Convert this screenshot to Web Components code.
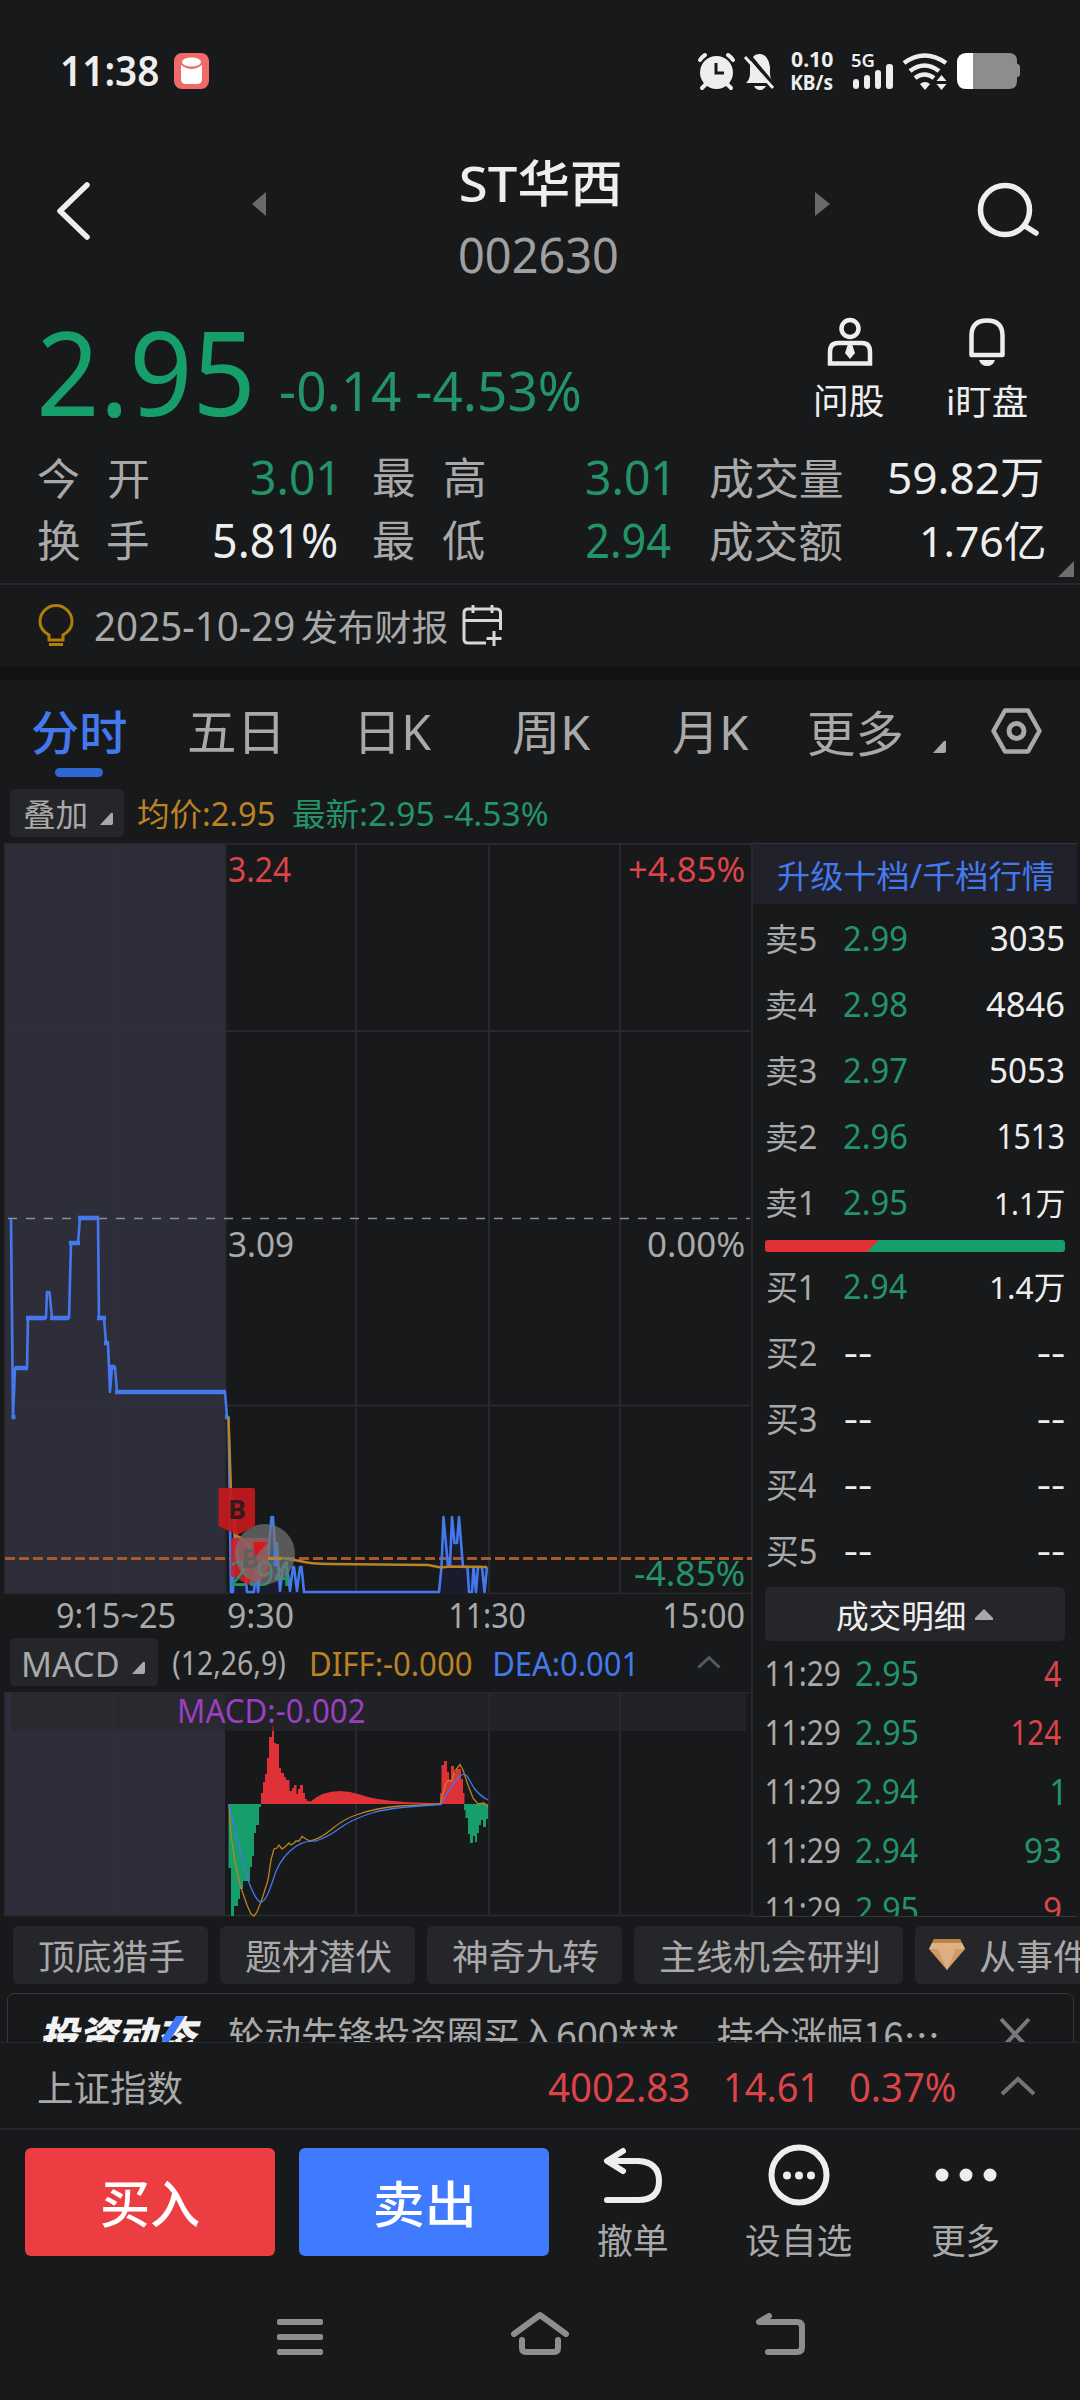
<!DOCTYPE html>
<html lang="zh-CN">
<head>
<meta charset="utf-8">
<title>ST华西 002630</title>
<style>
  html { background: #17191a; }
  body {
    margin: 0;
    width: 1080px;
    height: 2400px;
    overflow: hidden;
    display: flex;
    flex-direction: column;
    background: #17191a;
    color: #a9a9a9;
    font-family: "Noto Sans", "Noto Sans CJK SC", sans-serif;
    --white: #eeeeee;
    --green: #169e6b;
    --green-text: #239468;
    --red: #e03236;
    --red-text: #db4448;
    --blue: #4479ee;
    --orange: #bd8223;
    --chip: #25262a;
    --line: #28292c;
  }
</style>
</head>
<body>
<status-bar></status-bar>
<title-bar></title-bar>
<quote-panel></quote-panel>
<report-notice></report-notice>
<period-tabs></period-tabs>
<overlay-bar></overlay-bar>
<market-board></market-board>
<signal-chips></signal-chips>
<news-strip></news-strip>
<index-bar></index-bar>
<trade-bar></trade-bar>
<system-nav></system-nav>

<script>
const ctx = document.createElement('canvas').getContext('2d');

// Text whose ink fills a box of exactly w x h pixels.
class InkText extends HTMLElement {
  constructor() {
    super();
    this.attachShadow({mode: 'open'});
    this.shadowRoot.innerHTML = `
      <style>
        :host { display: block; flex: none; }
        span { display: block; width: max-content; white-space: pre; transform-origin: 0 0; }
      </style>
      <span><slot></slot></span>
    `;
  }

  connectedCallback() {
    const num = name => Number(this.getAttribute(name) || 0);
    const text = this.textContent;
    const cs = getComputedStyle(this);
    const measure = size => {
      ctx.font = `${cs.fontStyle} ${cs.fontWeight} ${size}px ${cs.fontFamily}`;
      return ctx.measureText(text);
    };

    let m = measure(100);
    const size = num('size') ||
      num('h') * 100 / (m.actualBoundingBoxAscent + m.actualBoundingBoxDescent);
    m = measure(size);
    const ink = m.actualBoundingBoxLeft + m.actualBoundingBoxRight;
    const w = num('w') || ink;
    const h = num('h') || m.actualBoundingBoxAscent + m.actualBoundingBoxDescent;

    const span = this.shadowRoot.querySelector('span');
    let scale = w / ink;
    if (this.hasAttribute('spread')) {
      span.style.letterSpacing = (w - ink) / (text.length - 1) + 'px';
      scale = 1;
    }
    const lineHeight = Math.round(size * 1.2);
    const baseline = (lineHeight + m.fontBoundingBoxAscent - m.fontBoundingBoxDescent) / 2;
    span.style.fontSize = size + 'px';
    span.style.lineHeight = lineHeight + 'px';
    span.style.transform = `translate(${m.actualBoundingBoxLeft * scale}px,` +
      `${m.actualBoundingBoxAscent - baseline}px) scaleX(${scale})`;

    this.style.width = w + 'px';
    this.style.height = h + 'px';
    this.style.marginLeft = num('gap') + 'px';
    if (this.hasAttribute('top')) this.style.marginTop = num('top') + 'px';
    if (this.hasAttribute('c')) this.style.color = `var(--${this.getAttribute('c')})`;
  }
}
customElements.define('ink-text', InkText);

// name: [width, height, markup]
const icons = {
  app: [35, 36, `<rect width="35" height="36" rx="8" fill="#f06a6a"/>
    <path d="M7 12q10.500 8 21 0v14q0 5-5 5h-11q-5 0-5-5z" fill="#fff"/><ellipse cx="17.500" cy="9" rx="9.500" ry="4.500" fill="#fff"/>`],
  alarm: [37, 37, `<g fill="none" stroke="currentColor" stroke-width="4" stroke-linecap="round">
    <path d="M2 7q2-3 5-5M35 7q-2-3-5-5M8 31l-4 4M29 31l4 4"/></g>
    <circle cx="18.500" cy="19.500" r="16.500" fill="currentColor"/>
    <path d="M18 10v10h8" fill="none" stroke="#17191a" stroke-width="3"/>`],
  mute: [31, 37, `<path d="M2 30q4-4 4-9v-7Q7 1 15.500 1T26 14v7q0 5 4 9z" fill="currentColor"/>
    <path d="M10 33h12q-2 4-6 4t-6-4z" fill="currentColor"/>
    <path d="M3 0l29 35" stroke="#17191a" stroke-width="4"/><path d="M1 4l28 31" stroke="currentColor" stroke-width="3"/>`],
  signal: [40, 25, `<g fill="currentColor"><rect y="15" width="6" height="10" rx="3"/><rect x="11" y="11" width="6" height="14" rx="3"/>
    <rect x="22" y="6" width="6" height="19" rx="3"/><rect x="33" width="7" height="25" rx="3"/></g>`],
  wifi: [44, 37, `<g fill="none" stroke="currentColor" stroke-width="4.500"><path d="M1 10Q21.500-5 43 10"/><path d="M7 18q14.500-11 29 0"/><path d="M12 25q9.500-7 19 0"/></g>
    <path d="M22 37l-5-6q5-4 10 0z" fill="currentColor"/><path d="M38.500 22l5 6h-10zM38.500 37l5-6h-10z" fill="currentColor"/>`],
  battery: [63, 36, `<path d="M10 0h42q8 0 8 8v3q3 0 3 3v7q0 3-3 3v4q0 8-8 8H10q-10 0-10-10V10Q0 0 10 0z" fill="#8c8d8f"/>
    <path d="M16 0v36h-6q-10 0-10-10V10Q0 0 10 0z" fill="#fff"/>`],
  back: [33, 58, `<path d="M30 3L3 29l27 26" fill="none" stroke="currentColor" stroke-width="5.500" stroke-linecap="round" stroke-linejoin="round"/>`],
  prev: [14, 24, `<path d="M14 0v24L0 12z" fill="#6a6a6a"/>`],
  next: [15, 24, `<path d="M0 0v24l15-12z" fill="#6a6a6a"/>`],
  search: [61, 55, `<circle cx="27" cy="27" r="24.500" fill="none" stroke="currentColor" stroke-width="5.500"/>
    <path d="M47 43l11 7" stroke="currentColor" stroke-width="5.500" stroke-linecap="round"/>`],
  advisor: [46, 48, `<g fill="none" stroke="currentColor" stroke-width="4.500"><circle cx="23" cy="10.500" r="8.500"/>
    <path d="M11 25h24q8 0 8 9v11.500H3V34q0-9 8-9z"/></g><path d="M21 26h4l3 9-5 6-5-6z" fill="currentColor"/>`],
  bell: [36, 48, `<path d="M2.500 37V17Q3 2.500 18 2.500T33.500 17v20z" fill="none" stroke="currentColor" stroke-width="4.500" stroke-linejoin="round"/>
    <path d="M10 42h16q-2 6-8 6t-8-6z" fill="currentColor"/>`],
  bulb: [36, 43, `<g fill="none" stroke="#b27d0c" stroke-width="3"><path d="M11 36v-5Q2 26 2 17.500A16 16 0 0 1 34 17.500Q34 26 25 31v5z"/><path d="M11 40.500h14"/></g>`],
  calendar: [41, 41, `<g fill="none" stroke="#d8d8d8" stroke-width="3"><path d="M38.500 25V8q0-4-4-4H6Q2 4 2 8v26q0 4 4 4h18M2 15.500h36.500M11 0v8M30 0v8M32 26v15M24.500 33.500h15"/></g>`],
  corner: [13, 13, `<path d="M13 2v9q0 2-2 2H0L11 1q2-1 2 1z" fill="currentColor"/>`],
  gear: [51, 46, `<path d="M14 2.500h23l11.500 20.500L37 43.500H14L2.500 23z" fill="none" stroke="currentColor" stroke-width="4.500" stroke-linejoin="round"/>
    <circle cx="25.500" cy="23" r="7.500" fill="none" stroke="currentColor" stroke-width="5"/>`],
  upSmall: [24, 13, `<path d="M1.500 11.500L12 1.500l10.500 10" fill="none" stroke="#565965" stroke-width="3"/>`],
  up: [36, 20, `<path d="M2 18L18 3l16 15" fill="none" stroke="#737476" stroke-width="4"/>`],
  rise: [18, 11, `<path d="M9 0l9 9v2H0V9z" fill="currentColor"/>`],
  close: [30, 32, `<path d="M1 1l28 30M29 1L1 31" stroke="#77787a" stroke-width="4"/>`],
  gem: [36, 31, `<path d="M5 0h26l5 10-18 21L0 10z" fill="#cf9a66"/><path d="M5 0h26l2 4H3z" fill="#b98345"/>
    <path d="M3 4h30l3 6H0z" fill="#dfb286"/><path d="M9 10h18l-9 21z" fill="#dcb084"/>`],
  undo: [59, 55, `<g fill="none" stroke="currentColor" stroke-width="6" stroke-linecap="round" stroke-linejoin="round">
    <path d="M20 3L4 13l16 10M5 13h30q21 1 21 20T35 52H4"/></g>`],
  options: [62, 62, `<circle cx="31" cy="31" r="27.500" fill="none" stroke="currentColor" stroke-width="6"/>
    <g fill="currentColor"><circle cx="19" cy="31.500" r="4"/><circle cx="31" cy="31.500" r="4"/><circle cx="43" cy="31.500" r="4"/></g>`],
  dots: [62, 14, `<g fill="currentColor"><circle cx="7" cy="7" r="6.500"/><circle cx="31" cy="7" r="6.500"/><circle cx="55" cy="7" r="6.500"/></g>`],
  menu: [46, 36, `<g fill="#8d8e90"><rect width="46" height="6" rx="2"/><rect y="15" width="46" height="6" rx="2"/><rect y="30" width="46" height="6" rx="2"/></g>`],
  home: [58, 43, `<g fill="none" stroke="#8d8e90" stroke-width="6" stroke-linecap="round" stroke-linejoin="round">
    <path d="M3 22L29 3l26 19"/><path d="M11 28v8q0 4 4 4h28q4 0 4-4v-8"/></g>`],
  ret: [49, 42, `<path d="M13 3L3 9h38q5 0 5 5v20q0 5-5 5H12" fill="none" stroke="#8d8e90" stroke-width="6" stroke-linecap="round" stroke-linejoin="round"/>`],
};

class UiIcon extends HTMLElement {
  constructor() {
    super();
    this.attachShadow({mode: 'open'});
  }

  connectedCallback() {
    const [w, h, markup] = icons[this.getAttribute('name')];
    this.style.marginLeft = (this.getAttribute('gap') || 0) + 'px';
    if (this.hasAttribute('top')) this.style.marginTop = this.getAttribute('top') + 'px';
    this.shadowRoot.innerHTML = `
      <style>
        :host { display: block; flex: none; width: ${w}px; height: ${h}px; }
        svg { display: block; overflow: visible; }
      </style>
      <svg width="${w}" height="${h}" viewBox="0 0 ${w} ${h}">${markup}</svg>
    `;
  }
}
customElements.define('ui-icon', UiIcon);

// Registers an element that only has fixed markup.
function define(name, css, html) {
  customElements.define(name, class extends HTMLElement {
    constructor() {
      super();
      this.attachShadow({mode: 'open'});
    }

    connectedCallback() {
      this.shadowRoot.innerHTML = `<style>:host { display: block; flex: none; box-sizing: border-box; } ${css}</style>${html}`;
    }
  });
}

define('status-bar', `
  :host { display: flex; align-items: center; height: 142px; color: #eee; font-weight: 600; }
  .speed { margin-left: 16px; display: flex; flex-direction: column; gap: 7px; }
  .cell { margin-left: 18px; width: 42px; height: 36px; }
`, `
  <ink-text w="96" h="30" gap="62">11:38</ink-text>
  <ui-icon name="app" gap="16"></ui-icon>
  <ui-icon name="alarm" gap="489"></ui-icon>
  <ui-icon name="mute" gap="9"></ui-icon>
  <div class="speed"><ink-text w="42" h="16" style="font-weight:700">0.10</ink-text><ink-text w="42" h="16" style="font-weight:700">KB/s</ink-text></div>
  <div class="cell"><ink-text w="23" h="13" top="1">5G</ink-text><ui-icon name="signal" gap="2" top="-3"></ui-icon></div>
  <ui-icon name="wifi" gap="10"></ui-icon>
  <ui-icon name="battery" gap="10"></ui-icon>
`);

define('title-bar', `
  :host { display: flex; align-items: flex-start; height: 158px; color: #eee; }
  .name { margin-left: 193px; width: 162px; }
`, `
  <ui-icon name="back" gap="57" top="40"></ui-icon>
  <ui-icon name="prev" gap="162" top="50"></ui-icon>
  <div class="name">
    <ink-text w="159" h="47" gap="2" top="17" style="font-weight:500">ST华西</ink-text>
    <ink-text w="157" h="36" gap="1" top="31" style="color:#a0a0a0">002630</ink-text>
  </div>
  <ui-icon name="next" gap="194" top="50"></ui-icon>
  <ui-icon name="search" gap="148" top="41"></ui-icon>
`);

define('quote-panel', `
  :host { position: relative; height: 285px; border-bottom: 2px solid var(--line); }
  .head { display: flex; align-items: flex-start; height: 146px; }
  .tool { display: flex; flex-direction: column; align-items: center; padding-top: 18px; gap: 18px; color: #eee; width: 80px; }
  .row { display: flex; align-items: center; height: 63px; }
  .corner { position: absolute; right: 6px; bottom: 6px; width: 16px; height: 16px; background: #6e6e6e; clip-path: polygon(100% 0, 100% 100%, 0 100%); }
`, `
  <div class="head">
    <ink-text w="209" h="87" gap="41" top="31" c="green">2.95</ink-text>
    <ink-text w="299" h="40" gap="31" top="71" c="green-text">-0.14 -4.53%</ink-text>
    <div class="tool" style="margin-left:230px"><ui-icon name="advisor"></ui-icon><ink-text w="68" h="33">问股</ink-text></div>
    <div class="tool" style="margin-left:57px"><ui-icon name="bell"></ui-icon><ink-text w="79" h="33">i盯盘</ink-text></div>
  </div>
  <div class="row">
    <ink-text w="110" h="41" gap="38" spread>今 开</ink-text>
    <ink-text w="80" h="35" gap="104" c="green-text">3.01</ink-text>
    <ink-text w="110" h="41" gap="42" spread>最 高</ink-text>
    <ink-text w="80" h="35" gap="103" c="green-text">3.01</ink-text>
    <ink-text w="132" h="41" gap="43">成交量</ink-text>
    <ink-text w="153" h="38" gap="47" c="white">59.82万</ink-text>
  </div>
  <div class="row">
    <ink-text w="110" h="41" gap="38" spread>换 手</ink-text>
    <ink-text w="122" h="35" gap="66" c="white">5.81%</ink-text>
    <ink-text w="110" h="41" gap="38" spread>最 低</ink-text>
    <ink-text w="84" h="35" gap="103" c="green-text">2.94</ink-text>
    <ink-text w="132" h="41" gap="39">成交额</ink-text>
    <ink-text w="122" h="40" gap="80" c="white">1.76亿</ink-text>
  </div>
  <div class="corner"></div>
`);

define('report-notice', `
  :host { display: flex; align-items: center; height: 95px; border-bottom: 14px solid #111214; }
`, `
  <ui-icon name="bulb" gap="38"></ui-icon>
  <ink-text w="199" h="29" gap="21" top="2">2025-10-29</ink-text>
  <ink-text w="145" h="34" gap="8" top="1">发布财报</ink-text>
  <ui-icon name="calendar" gap="15"></ui-icon>
`);

define('period-tabs', `
  :host { display: flex; align-items: flex-start; height: 109px; }
  .on { margin-left: 32px; color: var(--blue); font-weight: 500; }
  .on::after { content: ""; display: block; width: 48px; height: 9px; margin: 14px 0 0 23px; border-radius: 5px; background: #3067d0; }
`, `
  <div class="on"><ink-text w="94" h="44" top="30">分时</ink-text></div>
  <ink-text w="89" h="42" gap="63" top="32">五日</ink-text>
  <ink-text w="71" h="42" gap="83" top="32">日K</ink-text>
  <ink-text w="78" h="42" gap="81" top="32">周K</ink-text>
  <ink-text w="76" h="42" gap="82" top="32">月K</ink-text>
  <ink-text w="93" h="46" gap="60" top="30">更多</ink-text>
  <ui-icon name="corner" gap="31" top="60"></ui-icon>
  <ui-icon name="gear" gap="45" top="28"></ui-icon>
`);

define('pick-button', `
  :host { display: flex; align-items: center; height: 48px; padding-left: 14px; border-radius: 5px; background: var(--chip); }
  ui-icon { padding-top: 10px; }
`, `<slot></slot><ui-icon name="corner" gap="14"></ui-icon>`);

define('overlay-bar', `
  :host { display: flex; align-items: center; height: 54px; padding-bottom: 6px; }
  pick-button { width: 114px; margin-left: 10px; }
`, `
  <pick-button><ink-text w="62" h="29" top="2">叠加</ink-text></pick-button>
  <ink-text w="136" h="30" gap="14" c="orange">均价:2.95</ink-text>
  <ink-text w="254" h="30" gap="19" c="green-text">最新:2.95 -4.53%</ink-text>
`);

define('minute-chart', `
  :host { position: relative; height: 751px; }
  svg { display: block; }
  ink-text { position: absolute; }
`, `
  <svg width="753" height="751" viewBox="0 843 753 751">
    <path d="M4 844H225V1594H4z" fill="#2e2e3a"/>
    <g stroke="#28292c" stroke-width="2" fill="none">
      <path d="M4 844H752M225 1031H750M225 1405.500H750M4 1593.500H752M356 844V1594M489 844V1594M620 844V1594"/>
      <path d="M5 844V1594M225.500 844V1594"/>
      <path d="M114 844V1594M8 1031H225M8 1405.500H225" stroke="#32323c" stroke-width="1"/>
    </g>
    <path d="M8 1218.500H750" stroke="#8b8f9c" stroke-width="1.300" stroke-dasharray="9 9"/>
    <path d="M229 1594V1592L252 1575 270 1520 283 1590 303 1592H439L441 1567 443 1530H460L463 1567H487V1594z" fill="#1c1c31" opacity=".8"/>
    <path d="M5 1558.500H752" stroke="#ad5729" stroke-width="3" stroke-dasharray="10 4"/>
    <g fill="none" stroke="#4479ee" stroke-linejoin="round">
      <path stroke-width="2.600" d="M11 1219L13 1417 15 1368H27L28 1318H46L47 1292H49.500L52 1318H69L71 1243H78L80 1218H98L99 1318H104L106 1343H108L110 1392 112 1367H115L117 1392H225L227 1417H228.500L231 1592H233L235 1520 238 1560 244 1560 247 1592H254L256 1568 258 1592 262 1560 268 1560 271.500 1517H273L276 1565 277 1543 280 1591 283 1567 287 1567 290 1591 293 1567H294L297 1591 300 1567H301.500L304 1592H439L441.500 1567 443.500 1517 448 1566H450L452 1517 454.500 1543H457L459 1517 463 1567H467.500L469 1592H472L473.500 1567 476 1592 478 1567H482L484.500 1592 487 1567"/>
      <path stroke-width="4.500" d="M15 1368H28M26 1318H46M50 1318H69M69 1243H80M78 1218H99M97 1318H106M104 1343H109M110 1367H115M115 1392H226M11.500 1417H15.500M225 1417H228"/>
    </g>
    <path d="M228.500 1417L231 1490 235 1536Q241 1536 246 1543T262 1558H282L300 1561Q310 1564 330 1564L428 1565 441 1567.500 450 1566.500 487 1567" fill="none" stroke="#bb8322" stroke-width="2.400"/>
    <path d="M231 1540q0-2 2-2h33q2 0 2 2v36l-18 9-19-9z" fill="#d01f26" opacity=".9"/>
    <text x="230" y="1585.500" font-size="34" textLength="62" lengthAdjust="spacingAndGlyphs" fill="#239468">2.94</text>
    <text x="241" y="1568" font-size="27" font-weight="700" fill="#303030">B</text>
    <path d="M265 1524a30 30 0 1 1 0 60a30 30 0 1 1 0-60z" fill="#777" opacity=".68"/>
    <path d="M253 1542H268L255 1557z" fill="#d5191e"/>
    <path d="M275 1550V1566" stroke="#4479ee" stroke-width="3"/>
    <path d="M268 1558.500H282" stroke="#bb8322" stroke-width="3"/>
    <path d="M218.500 1490q0-2 2-2h32.500q2 0 2 2v36l-18 9-18.500-9z" fill="#c4191c" opacity=".93"/>
    <text x="228" y="1519" font-size="27" font-weight="700" fill="#35191b">B</text>
  </svg>
  <ink-text w="62" h="26" c="red-text" style="left:229px;top:14px">3.24</ink-text>
  <ink-text w="115" h="26" c="red-text" style="left:629px;top:14px">+4.85%</ink-text>
  <ink-text w="64" h="26" style="left:229px;top:389px">3.09</ink-text>
  <ink-text w="96" h="26" style="left:648px;top:389px">0.00%</ink-text>
  <ink-text w="109" h="26" c="green-text" style="left:635px;top:718px">-4.85%</ink-text>
`);

// Histogram columns as [left, right, end]; the zero line is y = 1804.
const columns = {
  red: [[261, 263, 1793], [263, 265, 1782], [265, 267, 1774], [267, 269, 1758], [269, 272, 1737], [272, 274, 1726],
    [274, 276, 1743], [276, 279, 1744], [279, 281, 1768], [281, 284, 1773], [284, 286, 1777], [286, 289.5, 1780],
    [289.5, 292, 1791], [292, 294, 1788], [294, 296.5, 1785], [296.5, 298, 1794], [298, 300, 1789], [300, 303, 1785],
    [303, 305, 1793], [305, 307, 1799], [307, 310, 1801], [440, 441.5, 1793], [441.5, 444, 1765], [444, 447, 1761],
    [447, 449, 1772], [449, 451, 1780], [451, 454, 1766], [454, 456, 1773], [456, 461, 1769], [461, 463, 1779], [463, 464.5, 1793]],
  green: [[228.5, 231, 1868], [231, 234, 1916], [234, 238, 1906], [238, 240, 1899], [240, 243, 1889], [243, 250, 1881],
    [250, 252, 1867], [252, 254, 1856], [254, 256, 1833], [256, 259, 1825], [259, 261, 1807], [464, 465.5, 1810],
    [465.5, 468, 1818], [468, 470, 1834], [470, 473, 1843], [473, 475, 1836], [475, 477, 1842], [477, 479, 1833],
    [479, 481, 1825], [481, 483, 1820], [483, 486, 1827], [486, 488, 1819]],
};
const bars = list => list.map(([l, r, y]) => `M${l} 1804V${y}H${r}V1804z`).join('');

define('macd-chart', `
  .bar { display: flex; align-items: center; box-sizing: border-box; height: 54px; padding: 0 0 6px 10px; }
  pick-button { width: 148px; }
  .plot { position: relative; }
  svg { display: block; }
  .plot ink-text { position: absolute; left: 180px; top: 7px; }
`, `
  <div class="bar">
    <pick-button><ink-text w="94" h="25" top="4">MACD</ink-text></pick-button>
    <ink-text w="112" h="29" gap="15" top="6">(12,26,9)</ink-text>
    <ink-text w="159" h="24" gap="27" top="3" c="orange">DIFF:-0.000</ink-text>
    <ink-text w="138" h="24" gap="24" top="3" c="blue">DEA:0.001</ink-text>
    <ui-icon name="upSmall" gap="64"></ui-icon>
  </div>
  <div class="plot">
    <svg width="753" height="225" viewBox="0 1692 753 225">
      <path d="M4 1692H225V1916H4z" fill="#2e2e3a"/>
      <path d="M11 1692H746V1731H11z" fill="#222327"/><path d="M11 1692H225V1731H11z" fill="#29292f"/>
      <path d="M4 1692.500H752M4 1915.500H752M356 1692V1916M489 1692V1916M620 1692V1916M5 1692V1916" fill="none" stroke="#28292c" stroke-width="2"/>
      <path d="M114 1692V1916" stroke="#32323c"/>
      <path d="${bars(columns.red)}M310 1804V1802Q322 1791 340 1791 350 1791 360 1794.500T385 1800Q405 1803 440 1803V1804z" fill="#e03236"/>
      <path d="M272 1726h2v5h-2z" fill="#5a2a2e"/>
      <path d="${bars(columns.green)}" fill="#169e6b"/>
      <g fill="none" stroke-width="1.300">
        <path stroke="#bb8322" d="M229 1804L231 1835 235 1862 240 1885 247 1905 251 1914 254 1916 257 1912 262 1899 268 1880 271 1860 274 1849 277 1848 279 1845 282 1849 286 1846 289 1843 291 1845 294 1843 296 1841 299 1841 302 1836.500 306 1839 310 1841Q320 1839 332 1829T356 1815Q375 1808 400 1806L440 1804 446 1783 449 1780 452 1781 455 1771 460 1764.500 463 1770 468 1785 473 1798 478 1804 484 1803 488 1807"/>
        <path stroke="#4479ee" d="M229 1804L233 1822 240 1850 248 1880Q256 1902 261 1902T273 1880Q278 1862 290 1851T316 1841Q328 1837 340 1828T375 1812Q395 1807 441 1804.500L447 1793 455 1782Q462 1771 467 1776L474 1788Q480 1796 488 1800"/>
      </g>
    </svg>
    <ink-text w="184" h="24" style="color:#9a3fc2">MACD:-0.002</ink-text>
  </div>
`);

define('order-row', `
  :host { display: grid; grid-template-columns: 77px 1fr max-content; align-items: center; height: 66px; padding: 0 13px 0 14px; }
`, '<slot></slot>');

define('trade-row', `
  :host { display: grid; grid-template-columns: 89px 1fr max-content; align-items: center; height: 59px; padding: 2px 16px 0 14px; }
`, '<slot></slot>');

const orderRow = (label, price, amount, w, h = 26) => `
  <order-row>
    <ink-text w="${label.endsWith('1') ? 43 : 49}" h="30">${label}</ink-text>
    ${price === '--'
      ? '<ink-text w="26" size="34" gap="1" top="4" c="white">--</ink-text><ink-text w="26" size="34" top="4" c="white">--</ink-text>'
      : `<ink-text w="63" h="26" c="green-text">${price}</ink-text><ink-text w="${w}" h="${h}" c="white">${amount}</ink-text>`}
  </order-row>`;

const tradeRow = (price, amount, w, color) => `
  <trade-row>
    <ink-text w="73" h="26">11:29</ink-text>
    <ink-text w="62" h="26" c="green-text">${price}</ink-text>
    <ink-text w="${w}" h="26" c="${color}-text">${amount}</ink-text>
  </trade-row>`;

define('order-book', `
  :host { height: 1074px; overflow: hidden; border-bottom: 1px solid #333438; margin-right: 3px; }
  .upgrade { display: flex; align-items: center; justify-content: center; height: 61px; box-sizing: border-box; border-top: 1px solid #333438; background: #21212b; margin-bottom: 2px; }
  .ratio { height: 12px; margin: 4px 12px 2px; border-radius: 3px; background: linear-gradient(135deg, var(--red) 36.400%, var(--green) 36.600%); }
  .detail { display: flex; align-items: center; height: 54px; margin: 3px 12px 2px; border-radius: 5px; background: var(--chip); }
`, `
  <div class="upgrade"><ink-text w="276" h="30" gap="2" top="2" c="blue">升级十档/千档行情</ink-text></div>
  ${orderRow('卖5', '2.99', '3035', 73)}
  ${orderRow('卖4', '2.98', '4846', 78)}
  ${orderRow('卖3', '2.97', '5053', 73)}
  ${orderRow('卖2', '2.96', '1513', 65)}
  ${orderRow('卖1', '2.95', '1.1万', 68, 27)}
  <div class="ratio"></div>
  ${orderRow('买1', '2.94', '1.4万', 73, 27)}
  ${orderRow('买2', '--')}
  ${orderRow('买3', '--')}
  ${orderRow('买4', '--')}
  ${orderRow('买5', '--')}
  <div class="detail"><ink-text w="128" h="30" gap="72" top="2" c="white">成交明细</ink-text><ui-icon name="rise" gap="10"></ui-icon></div>
  ${tradeRow('2.95', '4', 17, 'red')}
  ${tradeRow('2.95', '124', 48, 'red')}
  ${tradeRow('2.94', '1', 9, 'green')}
  ${tradeRow('2.94', '93', 36, 'green')}
  ${tradeRow('2.95', '9', 17, 'red')}
`);

define('market-board', `
  :host { display: grid; grid-template-columns: 753px 1fr; height: 1074px; }
  .charts { box-sizing: border-box; border-right: 2px solid var(--line); }
  .axis { display: flex; align-items: center; height: 44px; }
`, `
  <div class="charts">
    <minute-chart></minute-chart>
    <div class="axis">
      <ink-text w="118" h="26" gap="57">9:15~25</ink-text>
      <ink-text w="65" h="26" gap="53">9:30</ink-text>
      <ink-text w="74" h="26" gap="158">11:30</ink-text>
      <ink-text w="79" h="26" gap="140">15:00</ink-text>
    </div>
    <macd-chart></macd-chart>
  </div>
  <order-book></order-book>
`);

define('signal-chips', `
  :host { display: flex; gap: 12px; height: 76px; padding: 9px 0 9px 13px; overflow: hidden; }
  div { flex: none; display: flex; align-items: center; height: 58px; padding: 0 24px 0 26px; box-sizing: border-box; border-radius: 6px; background: var(--chip); }
  div:last-child { padding-left: 14px; }
`, `
  <div><ink-text w="145" h="33">顶底猎手</ink-text></div>
  <div><ink-text w="145" h="33">题材潜伏</ink-text></div>
  <div><ink-text w="145" h="33">神奇九转</ink-text></div>
  <div style="padding-right:25px"><ink-text w="218" h="33">主线机会研判</ink-text></div>
  <div><ui-icon name="gem" top="-2"></ui-icon><ink-text w="109" h="33" gap="15">从事件</ink-text></div>
`);

define('news-strip', `
  :host { height: 49px; overflow: hidden; }
  .card { display: flex; align-items: flex-start; box-sizing: border-box; height: 90px; margin: 0 6px 0 7px; border: 1px solid #36373a; border-radius: 7px; }
  .brand { position: relative; font-weight: 900; font-style: italic; color: #f2f2f2; }
  .brand i { position: absolute; left: 160px; top: 22px; width: 9px; height: 26px; border-radius: 0 0 0 5px; background: #3f78f5; transform: skewX(-32deg); }
`, `
  <div class="card">
    <div class="brand"><ink-text w="161" h="38" gap="32" top="21">投资动态</ink-text><i></i></div>
    <ink-text w="449" h="36" gap="28" top="23">轮动先锋投资圈买入600***</ink-text>
    <ink-text w="219" h="36" gap="40" top="23" style="font-family:'Noto Sans CJK SC',sans-serif">持仓涨幅16…</ink-text>
    <ui-icon name="close" gap="63" top="24"></ui-icon>
  </div>
`);

define('index-bar', `
  :host { display: flex; align-items: center; height: 88px; border: solid var(--line); border-width: 1px 0 2px; color: var(--red-text); }
`, `
  <ink-text w="145" h="34" gap="38" top="2" style="color:#a9a9a9">上证指数</ink-text>
  <ink-text w="141" h="29" gap="365" top="3">4002.83</ink-text>
  <ink-text w="86" h="29" gap="37" top="3">14.61</ink-text>
  <ink-text w="105" h="29" gap="38" top="3">0.37%</ink-text>
  <ui-icon name="up" gap="45"></ui-icon>
`);

define('trade-bar', `
  :host { display: flex; height: 127px; padding-top: 18px; }
  .btn { display: flex; align-items: center; justify-content: center; width: 250px; height: 108px; border-radius: 6px; color: #fff; font-weight: 500; }
  .buy { margin-left: 25px; background: #ec3e42; }
  .sell { margin-left: 24px; background: #3f7aff; }
  .act { display: flex; flex-direction: column; justify-content: flex-end; align-items: center; height: 108px; }
  .act > div { display: flex; align-items: center; height: 54px; margin-bottom: 21px; color: #eee; }
`, `
  <div class="btn buy"><ink-text w="97" h="47" top="3">买入</ink-text></div>
  <div class="btn sell"><ink-text w="96" h="47" top="3">卖出</ink-text></div>
  <div class="act" style="width:69px;margin-left:49px"><div><ui-icon name="undo"></ui-icon></div><ink-text w="69" h="33">撤单</ink-text></div>
  <div class="act" style="width:105px;margin-left:79px"><div><ui-icon name="options"></ui-icon></div><ink-text w="105" h="33">设自选</ink-text></div>
  <div class="act" style="width:67px;margin-left:81px"><div><ui-icon name="dots"></ui-icon></div><ink-text w="67" h="33">更多</ink-text></div>
`);

define('system-nav', `
  :host { display: flex; align-items: flex-start; height: 143px; }
`, `
  <ui-icon name="menu" gap="277" top="62"></ui-icon>
  <ui-icon name="home" gap="188" top="55"></ui-icon>
  <ui-icon name="ret" gap="187" top="56"></ui-icon>
`);
</script>
</body>
</html>
